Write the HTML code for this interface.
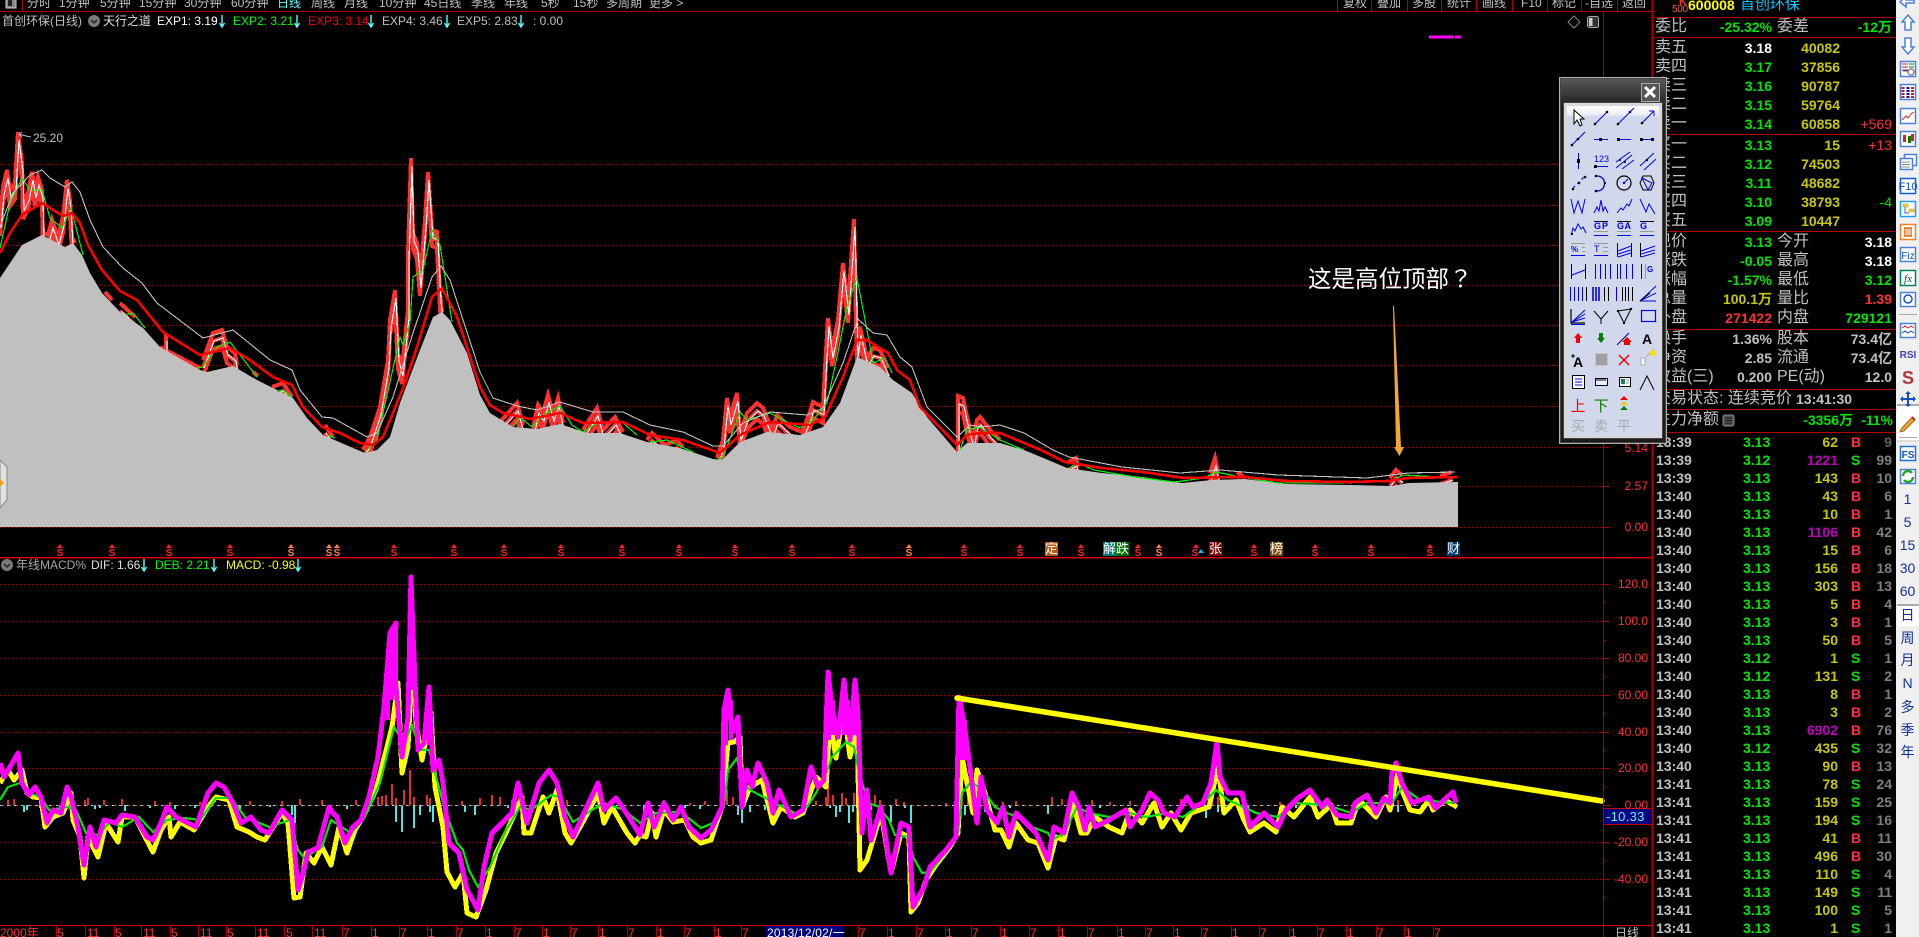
<!DOCTYPE html>
<html><head><meta charset="utf-8"><title>首创环保</title>
<style>
html,body{margin:0;padding:0;background:#000}
body{position:relative;width:1919px;height:937px;overflow:hidden;font-family:"Liberation Sans","WenQuanYi Zen Hei","Noto Sans CJK SC",sans-serif;font-size:12px;color:#c0c0c0}
.a{position:absolute;white-space:nowrap}
svg{position:absolute;left:0;top:0}
.tb span{position:absolute;top:-5px;line-height:16px;white-space:nowrap}
.l{position:absolute;left:1653px;width:243px;height:1px;background:#b00000}
.q span{position:absolute;line-height:18px;white-space:nowrap}
.lb{font-size:16px}
.n{font-size:14px;font-weight:bold}
.pr{right:147px}.vo{right:79px}.de{right:27px;font-weight:normal!important}.rr{right:27px}
.r{position:absolute;left:0;width:1919px;height:18px;line-height:18px;font-size:14px;font-weight:bold}
.r span{position:absolute}
.r .t{left:1656px;color:#c0c0c0}.r .p{left:1743px;color:#00e600}.r .v{right:81px;color:#c8c800}.r .m{color:#c000c0}
.r .b{left:1851px;color:#ff3232}.r .s{left:1851px;color:#00e600}.r .c{right:27px;color:#808080}
.ax{position:absolute;right:271px;color:#ff3232;line-height:14px;font-size:12px}
.side{position:absolute;left:1896px;width:23px;text-align:center;color:#1030a0;font-size:14px;line-height:18px}
.tag{position:absolute;top:542px;width:13px;height:14px;line-height:14px;font-size:13px;color:#fff;text-align:center}
</style></head><body>

<svg width="1919" height="937" viewBox="0 0 1919 937">
<g stroke="#b00000" stroke-width="1" stroke-dasharray="1 3" shape-rendering="crispEdges">
<path d="M0 164.5H1603M0 205.5H1603M0 245.5H1603M0 285.5H1603M0 325.5H1603M0 365.5H1603M0 406.5H1603M0 447.5H1603M0 486.5H1603M0 527.5H1603M0 584.5H1603M0 621.5H1603M0 658.5H1603M0 695.5H1603M0 732.5H1603M0 768.5H1603M0 842.5H1603M0 879.5H1603"/>
</g>
<defs>
<path id="cd" d="M0,220L3,187L7,170L10,190L15,183L18,132L22,163L23,203L28,193L32,172L35,190L38,177L42,190L43,233L48,235L52,220L58,237L63,217L67,180L70,200L72,237L75,243M105,292L112,300M120,303L135,317M166,333V347M160,347L200,368M203,360L213,333L222,330L227,347L235,353L237,365M253,372L258,376M272,387L283,383L292,397M325,425L333,437M363,450L370,437L380,407L388,360L390,320L395,290L398,353L402,368L408,310L408,253L411,158L413,233L417,243L420,280L425,220L428,172L432,230L437,232L440,293L442,312M500,422L517,403L523,425M533,428L538,405L543,413L548,395L553,413L558,398L563,423M583,430L597,408L603,430L615,417L623,432M647,440L652,433L665,445L677,440L683,447M717,458L723,440L727,398L730,417L737,393L740,433L747,413L757,403L763,408L772,430L777,415L790,427L802,432L810,412L813,402L823,407L825,367L828,318L832,350L838,320L843,263L848,307L854,219L857,350L860,327L867,358L873,348L880,350L888,368M958,452V396L963,398L967,417L973,440L977,420L980,417L990,430L1000,440M1067,463L1076,458L1078,467M1210,473L1215,458L1218,472M1237,472L1245,478M1390,478L1396,470L1402,475M1440,476L1452,472"/>
</defs>
<use href="#cd" fill="none" stroke="#ff3232" stroke-width="4" shape-rendering="crispEdges"/>
<use href="#cd" fill="none" stroke="#ff3232" stroke-width="4" transform="translate(0,8)" shape-rendering="crispEdges"/>
<use href="#cd" fill="none" stroke="#ff3232" stroke-width="4" transform="translate(0,16)" shape-rendering="crispEdges"/>
<use href="#cd" fill="none" stroke="#ffffff" stroke-width="1.1" transform="translate(1,8)" shape-rendering="crispEdges"/>
<!-- gray area -->
<path fill="#c0c0c0" d="M0,527V278L10,263L22,245L42,235L65,247L73,243L82,255L90,273L102,293L120,312L143,328L160,347L200,370L207,372L233,366L257,380L293,398L307,418L323,435L353,448L365,453L377,450L390,437L400,403L420,350L433,317L442,312L450,320L467,353L480,395L490,413L513,427L537,429L560,424L587,433L620,433L647,442L680,448L713,459L722,460L740,442L767,432L800,435L823,427L840,403L857,357L880,367L893,380L912,393L927,417L957,452L967,443L1000,443L1024,450L1053,462L1067,468L1102,473L1143,477L1182,483L1212,480L1245,479L1286,484L1351,485L1392,486L1408,483L1458,482V527Z"/>
<g fill="none" shape-rendering="crispEdges">
<path stroke="#00f000" stroke-width="1.2" d="M0,248L10,203L22,178L30,190L42,190L50,218L62,228L71,208L83,255M125,315L133,313L145,328M197,368L203,367L217,347L230,342L257,377M277,392L283,390L292,397M327,435L335,438M365,452L377,440L400,337L403,345L410,323L413,277L423,270L432,230L440,245L452,322M513,427L520,417L532,427L543,415L560,406L572,425L583,432L597,423L622,422L637,435M650,442L667,440L693,452M717,460L723,457L740,412L747,420L770,413L783,420L800,428L813,420L827,403L837,357L847,307L857,278L867,330L873,363L885,358L892,373M960,450L967,430L980,427L1000,440L1024,450M1069,468L1078,463L1094,470L1135,477L1175,482L1204,478L1216,472L1241,477L1278,483L1347,483L1392,480L1404,475L1457,478"/>
<path stroke="#c0c0c0" stroke-width="1.1" d="M0,227L13,193L30,175L42,170L50,178L65,187L72,182L80,192L90,220L103,247L123,268L142,283L157,303L203,338L233,330L270,360L292,370L300,390L322,417L333,418L367,437L377,433L393,397L413,333L432,277L441,266L450,280L480,372L493,398L517,406L537,410L560,402L593,412L623,412L650,425L683,432L713,446L723,446L743,423L770,412L807,415L823,408L843,363L858,319L873,333L887,335L900,357L912,367L927,407L957,437L970,425L980,427L1000,425L1024,433L1053,450L1069,457L1122,467L1180,473L1220,470L1278,475L1367,478L1408,473L1455,472"/>
<path stroke="#ff0000" stroke-width="2.6" d="M0,253L10,233L22,215L42,203L63,216L72,213L80,223L88,245L102,270L120,291L137,300L163,332L200,355L230,348L250,360L273,377L292,385L303,407L322,427L340,433L360,443L373,445L383,437L393,413L405,383L417,347L432,297L442,288L457,317L480,387L490,405L503,413L530,419L560,413L583,423L623,422L650,435L683,440L720,453L740,435L770,422L810,425L825,417L843,377L857,340L867,340L888,353L897,370L910,380L920,407L957,445L967,435L980,433L1000,433L1041,450L1065,462L1102,468L1143,472L1184,478L1229,477L1245,477L1286,481L1347,482L1388,481L1408,478L1457,477"/>
</g>
<!-- magenta marker -->
<path d="M1429 37H1454M1455 37H1461" stroke="#ff00ff" stroke-width="3"/>
<!-- peak label leader -->
<path d="M19,134L22,132M19,134L22,137M19,134L26,136L31,137" stroke="#c0c0c0" fill="none"/>
<!-- annotation arrow -->
<path d="M1393,306L1396,447H1394L1399.5,456L1404,447H1401L1394,306Z" fill="#f2a92e"/>
<!-- markers -->
<path fill="#ff2020" d="M60,544l3,4h-6zM112,544l3,4h-6zM169,544l3,4h-6zM230,544l3,4h-6zM394,544l3,4h-6zM454,544l3,4h-6zM504,544l3,4h-6zM561,544l3,4h-6zM622,544l3,4h-6zM679,544l3,4h-6zM735,544l3,4h-6zM792,544l3,4h-6zM852,544l3,4h-6zM964,544l3,4h-6zM1020,544l3,4h-6zM1081,544l3,4h-6zM1138,544l3,4h-6zM1196,544l3,4h-6zM1254,544l3,4h-6zM1315,544l3,4h-6zM1371,544l3,4h-6zM1430,544l3,4h-6z"/>
<path fill="#ff8040" d="M291,544l3,4h-6zM329,544l3,4h-6zM337,544l3,4h-6zM909,544l3,4h-6zM1159,544l3,4h-6z"/>
<path fill="#30b0ff" d="M1201,549l3,4h-6z"/>
<g font-family="Liberation Sans" font-size="10" font-weight="bold" text-anchor="middle" fill="#ff2020">
<text x="60" y="556">S</text><text x="112" y="556">S</text><text x="169" y="556">S</text><text x="230" y="556">S</text><text x="291" y="556" fill="#ff8040">S</text><text x="329" y="556" fill="#ff8040">S</text><text x="337" y="556" fill="#ff8040">S</text><text x="394" y="556">S</text><text x="454" y="556">S</text><text x="504" y="556">S</text><text x="561" y="556">S</text><text x="622" y="556">S</text><text x="679" y="556">S</text><text x="735" y="556">S</text><text x="792" y="556">S</text><text x="852" y="556">S</text><text x="909" y="556" fill="#ff8040">S</text><text x="964" y="556">S</text><text x="1020" y="556">S</text><text x="1081" y="556">S</text><text x="1138" y="556">S</text><text x="1159" y="556" fill="#ff8040">S</text><text x="1195" y="556">S</text><text x="1254" y="556">S</text><text x="1315" y="556">S</text><text x="1371" y="556">S</text><text x="1430" y="556">S</text>
</g>
<!-- histogram -->
<path stroke="#ff3232" stroke-width="1.8" d="M8 805V800M14 805V799M85 805V800M88 805V798M104 805V800M122 805V799M155 805V801M170 805V802M200 805V802M250 805V801M282 805V801M300 805V799M322 805V800M356 805V800M378 805V797M382 805V796M386 805V795M392 805V784M396 805V798M404 805V790M410 805V770M414 805V797M427 805V795M430 805V798M462 805V801M480 805V798M492 805V795M500 805V797M512 805V800M545 805V800M567 805V800M664 805V800M690 805V803M705 805V801M722 805V803M727 805V790M733 805V797M745 805V800M816 805V801M826 805V797M828 805V783M833 805V795M842 805V793M846 805V798M854 805V793M875 805V795M880 805V800M896 805V799M904 805V802M946 805V803M962 805V798M968 805V797M975 805V801M987 805V800M1003 805V802M1016 805V801M1052 805V797M1062 805V799M1092 805V800M1110 805V802M1130 805V801M1181 805V799M1212 805V795M1218 805V797M1280 805V802M1310 805V801M1392 805V797M1398 805V800"/>
<path stroke="#55ffff" stroke-width="1.8" d="M24 805V812M27 805V810M40 805V808M60 805V808M95 805V809M100 805V808M125 805V811M150 805V808M175 805V809M195 805V808M230 805V808M240 805V809M270 805V807M295 805V823M292 805V815M330 805V808M347 805V809M396 805V822M402 805V832M414 805V828M420 805V815M430 805V812M433 805V822M440 805V818M465 805V812M475 805V815M508 805V808M530 805V808M560 805V808M644 805V812M650 805V808M685 805V808M700 805V809M742 805V823M738 805V815M750 805V812M765 805V810M830 805V808M836 805V817M840 805V812M849 805V823M853 805V812M871 805V810M891 805V822M905 805V808M911 805V823M957 805V812M965 805V815M985 805V812M1010 805V808M1048 805V814M1100 805V808M1143 805V812M1180 805V810M1206 805V818M1218 805V812M1243 805V814M1248 805V810M1296 805V808M1398 805V812M1408 805V808M1456 805V808"/>
<path d="M0 805.5H1458" stroke="#55ffff" stroke-dasharray="3 4" stroke-width="1"/>
<path d="M2 805.5H1458" stroke="#ff3232" stroke-dasharray="2 5" stroke-width="1"/>
<!-- MACD lines -->
<g fill="none" shape-rendering="crispEdges" stroke-linejoin="round">
<path stroke="#ffff00" stroke-width="5" d="M0,783L8,770L14,780L22,770L27,793L33,797L41,798L45,827L53,817L63,813L71,793L73,820L80,837L84,878L88,837L98,857L106,823L118,842L122,817L135,817L143,833L153,852L161,830L169,817L171,837L180,822L194,830L208,807L216,797L229,800L237,827L249,832L257,837L265,840L282,813L288,823L294,898L300,897L306,853L314,863L322,847L331,865L339,827L347,853L355,830L363,817L376,790L392,727L398,683L402,773L408,747L413,650L416,723L422,760L431,713L435,787L443,827L447,872L455,887L463,873L467,913L476,917L486,890L496,853L506,833L522,797L524,833L531,833L543,797L549,813L557,790L565,833L571,843L584,820L598,793L604,823L612,807L627,833L635,843L640,835L646,837L652,813L656,837L664,810L673,822L685,820L693,837L701,843L711,840L722,807L728,743L734,742L740,737L742,807L750,787L762,780L773,823L781,807L795,817L803,813L816,777L826,787L830,720L836,758L844,710L850,757L857,720L860,870L867,860L873,840L881,813L891,873L901,833L909,837L911,912L918,903L926,880L936,865L950,847L958,833L962,757L973,813L977,770L985,793L995,830L1001,830L1009,847L1016,823L1028,840L1038,843L1048,868L1056,837L1064,840L1073,803L1081,833L1087,833L1095,817L1109,827L1122,833L1130,810L1142,823L1154,803L1162,827L1171,813L1181,830L1191,813L1209,807L1218,767L1224,813L1236,800L1244,820L1250,832L1264,823L1276,832L1282,807L1294,817L1310,797L1318,817L1331,805L1337,823L1351,823L1359,800L1376,817L1386,797L1390,810L1398,773L1402,790L1410,810L1420,812L1429,800L1433,810L1445,800L1457,807"/>
<path stroke="#00e600" stroke-width="2.2" d="M0,800L8,787L20,783L29,793L41,797L49,810L67,807L76,810L86,833L98,835L110,822L122,827L139,817L153,832L167,820L184,818L200,820L216,798L231,798L245,817L269,827L290,820L298,850L304,858L322,847L331,820L351,833L363,820L380,783L394,727L404,743L412,725L420,750L429,750L445,810L457,843L463,850L469,870L478,887L490,867L506,830L520,807L531,810L551,795L559,797L573,822L592,810L604,803L624,810L640,823L656,813L681,812L701,828L713,823L724,807L728,770L737,758L742,783L750,790L775,803L795,813L807,807L816,793L826,773L832,757L846,742L854,747L860,777L869,803L879,807L889,820L895,835L909,837L913,857L922,873L930,872L946,852L958,833L962,793L971,782L983,790L995,807L1007,813L1020,818L1032,827L1048,833L1052,840L1064,833L1077,807L1089,813L1109,817L1130,813L1146,817L1167,813L1183,817L1203,803L1216,790L1228,800L1244,807L1256,813L1278,817L1294,803L1327,805L1351,813L1367,803L1392,803L1402,787L1420,800L1455,803"/>
<path stroke="#ff00ff" stroke-width="5" d="M0,763L4,777L10,767L18,753L22,783L29,795L35,787L41,797L47,823L53,810L61,813L67,787L71,797L78,827L84,865L90,827L96,847L104,820L116,823L122,815L135,817L147,837L153,840L161,823L167,807L176,817L196,827L208,793L216,783L224,787L233,803L241,823L251,817L261,830L269,833L282,810L292,820L298,890L304,870L308,852L318,848L329,807L333,813L337,817L345,843L353,827L361,820L369,797L378,757L384,707L390,633L396,623L394,663L402,757L408,717L411,577L413,633L418,750L424,743L429,687L433,770L439,760L443,783L449,843L459,853L467,890L471,897L478,910L484,867L492,833L502,823L512,813L518,783L527,823L539,783L549,770L557,783L565,817L573,837L584,813L598,783L604,810L616,798L629,817L640,835L648,803L654,827L664,803L673,820L681,807L689,827L701,838L711,830L722,807L724,710L728,690L732,733L738,717L742,807L747,770L752,787L758,763L767,783L773,813L779,790L791,817L803,810L811,767L818,787L824,780L828,672L832,707L838,737L844,680L850,740L855,680L858,713L862,833L867,790L871,840L881,807L891,873L901,823L909,827L913,907L924,887L930,867L946,850L956,837L959,697L964,722L969,760L977,823L981,777L987,810L997,823L1003,807L1009,837L1016,813L1026,823L1036,833L1048,860L1054,827L1064,833L1072,793L1079,807L1085,830L1089,807L1095,827L1109,820L1126,810L1130,827L1142,810L1150,793L1158,800L1164,813L1175,817L1187,797L1193,807L1203,803L1211,783L1217,742L1220,777L1228,793L1236,793L1242,793L1250,827L1264,813L1278,827L1286,810L1298,798L1310,790L1322,807L1327,800L1337,815L1351,817L1355,803L1367,795L1376,813L1384,798L1390,803L1392,773L1396,763L1402,783L1412,803L1429,797L1435,808L1453,792L1456,803"/>
<path stroke="#ff00ff" stroke-width="4" d="M392 630V700M396 625V690M388 650V720M411 577V690M429 687V745M726 695V745M731 700V740M738 717V745M829 672V740M833 700V735M844 680V735M848 700V735M855 680V735M961 697V760M965 720V760"/>
</g>
<path d="M957,698L1602,801" stroke="#ffff00" stroke-width="5.5" stroke-linecap="round"/>
<!-- frame lines -->
<g stroke="#b00000" fill="none" shape-rendering="crispEdges">
<path d="M0 11.5H1653M22.5 0V11M1337.5 0V11M1371.5 0V11M1407.5 0V11M1441.5 0V11M1476.5 0V11M1512.5 0V11M1547.5 0V11M1581.5 0V11M1617.5 0V11M1603.5 11V937"/>
<path d="M0 557.5H1653" stroke="#d80000" stroke-width="1.5"/>
<path d="M0 925.5H1653" stroke="#d80000"/>
<path d="M1603 447.5h6M1603 486.5h6M1603 527.5h6M1603 584.5h6M1603 621.5h6M1603 658.5h6M1603 695.5h6M1603 732.5h6M1603 768.5h6M1603 805.5h6M1603 842.5h6M1603 879.5h6M1603 602.5h3M1603 640.5h3M1603 676.5h3M1603 713.5h3M1603 750.5h3M1603 787.5h3M1603 823.5h3M1603 860.5h3M1603 897.5h3"/>
<path d="M56.5 925V937M85.5 925V937M114.5 925V937M141.5 925V937M170.5 925V937M198.5 925V937M226.5 925V937M255.5 925V937M284.5 925V937M312.5 925V937M342.5 925V937M371.5 925V937M399.5 925V937M427.5 925V937M456.5 925V937M485.5 925V937M514.5 925V937M542.5 925V937M570.5 925V937M598.5 925V937M627.5 925V937M656.5 925V937M684.5 925V937M714.5 925V937M741.5 925V937M858.5 925V937M887.5 925V937M916.5 925V937M945.5 925V937M971.5 925V937M1000.5 925V937M1029.5 925V937M1058.5 925V937M1087.5 925V937M1117.5 925V937M1145.5 925V937M1173.5 925V937M1201.5 925V937M1231.5 925V937M1259.5 925V937M1289.5 925V937M1317.5 925V937M1346.5 925V937M1376.5 925V937M1404.5 925V937M1433.5 925V937"/>
<path d="M1652.5 0V937" stroke-width="2"/>
</g>
<!-- title arrows -->
<path stroke="#55ffff" fill="none" stroke-width="1.4" d="M222 15V26M219.5 23L222 27L224.5 23M297 15V26M294.5 23L297 27L299.5 23M371 15V26M368.5 23L371 27L373.5 23M447 15V26M444.5 23L447 27L449.5 23M521 15V26M518.5 23L521 27L523.5 23M144 559V570M141.5 567L144 571L146.5 567M214 559V570M211.5 567L214 571L216.5 567M298 559V570M295.5 567L298 571L300.5 567"/>
<circle cx="94" cy="21" r="6" fill="#7a7a7a"/><path d="M91 20l3 3l3-3" stroke="#222" stroke-width="1.5" fill="none"/>
<circle cx="7" cy="565" r="6" fill="#7a7a7a"/><path d="M4 564l3 3l3-3" stroke="#222" stroke-width="1.5" fill="none"/>
<rect x="6" y="-2" width="10" height="10" fill="#888" stroke="#ccc"/><rect x="8" y="0" width="4" height="6" fill="#222"/>
<path d="M1574 16l6 6l-6 6l-6-6z" stroke="#888" fill="none"/>
<rect x="1587.5" y="16.5" width="11" height="11" rx="2" stroke="#aaa" fill="#333"/><rect x="1589" y="18" width="3.5" height="8" fill="#ccc"/>
<!-- left tab -->
<path d="M0 460L7 467V500L0 508Z" fill="#e0e0e0" stroke="#888"/><path d="M0 479L4 483L0 487Z" fill="#f0a020"/>
<rect x="1604" y="809" width="48" height="15" fill="#000080"/>
<path d="M1604 808.5H1652M1604 824.5H1652" stroke="#c00000"/>
<rect x="766" y="926" width="77" height="11" fill="#000080"/>
</svg>

<!-- toolbar -->
<div class="tb">
<span style="left:27px">分时</span><span style="left:59px">1分钟</span><span style="left:100px">5分钟</span><span style="left:139px">15分钟</span><span style="left:184px">30分钟</span><span style="left:231px">60分钟</span><span style="left:277px;color:#55ffff">日线</span><span style="left:311px">周线</span><span style="left:344px">月线</span><span style="left:379px">10分钟</span><span style="left:424px">45日线</span><span style="left:471px">季线</span><span style="left:504px">年线</span><span style="left:541px">5秒</span><span style="left:573px">15秒</span><span style="left:606px">多周期</span><span style="left:649px">更多 &gt;</span>
<span style="left:1343px">复权</span><span style="left:1377px">叠加</span><span style="left:1412px">多股</span><span style="left:1447px">统计</span><span style="left:1482px">画线</span><span style="left:1521px">F10</span><span style="left:1552px">标记</span><span style="left:1585px">-自选</span><span style="left:1622px">返回</span>
</div>

<!-- title row -->
<div class="a" style="left:2px;top:14px;line-height:14px">首创环保(日线)</div>
<div class="a" style="left:103px;top:14px;line-height:14px;color:#e0e0e0">天行之道</div>
<div class="a" style="left:157px;top:14px;line-height:14px;color:#fff">EXP1: 3.19</div>
<div class="a" style="left:233px;top:14px;line-height:14px;color:#00ff00">EXP2: 3.21</div>
<div class="a" style="left:308px;top:14px;line-height:14px;color:#ff0000">EXP3: 3.14</div>
<div class="a" style="left:382px;top:14px;line-height:14px;color:#c0c0c0">EXP4: 3.46</div>
<div class="a" style="left:457px;top:14px;line-height:14px;color:#c0c0c0">EXP5: 2.83</div>
<div class="a" style="left:533px;top:14px;line-height:14px;color:#c0c0c0">: 0.00</div>
<div class="a" style="left:33px;top:131px;line-height:14px">25.20</div>
<div class="a" style="left:1308px;top:261px;line-height:32px;font-size:23.5px;color:#fff;font-family:'Liberation Sans','Noto Sans CJK SC',sans-serif">这是高位顶部<span style="font-family:'Noto Sans CJK TC',sans-serif">？</span></div>

<!-- tags -->
<div class="tag" style="left:1045px;background:#c05a14">定</div>
<div class="tag" style="left:1103px;background:#007878">解</div>
<div class="tag" style="left:1116px;background:#007000">跌</div>
<div class="tag" style="left:1209px;background:#800000">张</div>
<div class="tag" style="left:1270px;background:#7a4a10">榜</div>
<div class="tag" style="left:1447px;background:#003a70">财</div>

<!-- MACD title -->
<div class="a" style="left:16px;top:558px;line-height:14px;color:#aaa">年线MACD%</div>
<div class="a" style="left:91px;top:558px;line-height:14px;color:#e0e0e0">DIF: 1.66</div>
<div class="a" style="left:155px;top:558px;line-height:14px;color:#00ff00">DEB: 2.21</div>
<div class="a" style="left:226px;top:558px;line-height:14px;color:#ffff00">MACD: -0.98</div>

<!-- axis labels -->
<div class="ax" style="top:441px">5.14</div><div class="ax" style="top:479px">2.57</div><div class="ax" style="top:520px">0.00</div>
<div class="ax" style="top:577px">120.0</div><div class="ax" style="top:614px">100.0</div><div class="ax" style="top:651px">80.00</div><div class="ax" style="top:688px">60.00</div><div class="ax" style="top:725px">40.00</div><div class="ax" style="top:761px">20.00</div><div class="ax" style="top:798px">0.00</div><div class="ax" style="top:835px">-20.00</div><div class="ax" style="top:872px">-40.00</div>
<div class="a" style="left:1606px;top:809px;line-height:15px;font-size:13px;color:#55ffff;letter-spacing:.3px">-10.33</div>

<!-- time axis -->
<div class="a" id="tx" style="left:0;top:926px;width:1650px;height:11px;line-height:14px;color:#ff3232;font-size:12px;overflow:hidden">
<span class="a" style="left:0">2000年</span><span class="a" style="left:57px">5</span><span class="a" style="left:87px">11</span><span class="a" style="left:115px">5</span><span class="a" style="left:143px">11</span><span class="a" style="left:171px">5</span><span class="a" style="left:200px">11</span><span class="a" style="left:227px">5</span><span class="a" style="left:257px">11</span><span class="a" style="left:286px">5</span><span class="a" style="left:314px">11</span><span class="a" style="left:343px">7</span><span class="a" style="left:372px">1</span><span class="a" style="left:400px">7</span><span class="a" style="left:428px">1</span><span class="a" style="left:457px">7</span><span class="a" style="left:486px">1</span><span class="a" style="left:515px">7</span><span class="a" style="left:543px">1</span><span class="a" style="left:571px">7</span><span class="a" style="left:599px">1</span><span class="a" style="left:628px">7</span><span class="a" style="left:657px">1</span><span class="a" style="left:685px">7</span><span class="a" style="left:715px">1</span><span class="a" style="left:742px">7</span><span class="a" style="left:767px;color:#fff;letter-spacing:.2px">2013/12/02/一</span><span class="a" style="left:859px">7</span><span class="a" style="left:888px">1</span><span class="a" style="left:917px">7</span><span class="a" style="left:946px">1</span><span class="a" style="left:972px">7</span><span class="a" style="left:1001px">1</span><span class="a" style="left:1030px">7</span><span class="a" style="left:1059px">1</span><span class="a" style="left:1088px">7</span><span class="a" style="left:1118px">1</span><span class="a" style="left:1146px">7</span><span class="a" style="left:1174px">1</span><span class="a" style="left:1202px">7</span><span class="a" style="left:1232px">1</span><span class="a" style="left:1260px">7</span><span class="a" style="left:1290px">1</span><span class="a" style="left:1318px">7</span><span class="a" style="left:1347px">1</span><span class="a" style="left:1377px">7</span><span class="a" style="left:1405px">1</span><span class="a" style="left:1434px">7</span><span class="a" style="left:1615px;color:#c0c0c0">日线</span>
</div>

<!-- right panel lines -->
<div class="l" style="top:17px"></div><div class="l" style="top:37px"></div><div class="l" style="top:134px"></div><div class="l" style="top:231px"></div><div class="l" style="top:329px"></div><div class="l" style="top:389px"></div><div class="l" style="top:409px"></div><div class="l" style="top:432px"></div>

<!-- quotes -->
<div class="q">
<span style="left:1679px;top:-7px;color:#ff3232;font-size:11px;font-weight:bold">K</span>
<span style="left:1672px;top:1px;color:#ff5050;font-size:10px;letter-spacing:-.3px">500</span>
<span class="n" style="left:1688px;top:-4px;color:#ffff00;font-size:14px">600008</span>
<span style="left:1740px;top:-4px;color:#00c8ff;font-size:15px">首创环保</span>

<span class="lb" style="left:1655px;top:18px">委比</span><span class="n pr" style="top:18px;color:#00e600">-25.32%</span><span class="lb" style="left:1777px;top:18px">委差</span><span class="n rr" style="top:18px;color:#00e600">-12万</span>

<span class="lb" style="left:1655px;top:39px">卖五</span><span class="n pr" style="top:39px;color:#fff">3.18</span><span class="n vo" style="top:39px;color:#c8c800">40082</span>
<span class="lb" style="left:1655px;top:58px">卖四</span><span class="n pr" style="top:58px;color:#00e600">3.17</span><span class="n vo" style="top:58px;color:#c8c800">37856</span>
<span class="lb" style="left:1655px;top:77px">卖三</span><span class="n pr" style="top:77px;color:#00e600">3.16</span><span class="n vo" style="top:77px;color:#c8c800">90787</span>
<span class="lb" style="left:1655px;top:96px">卖二</span><span class="n pr" style="top:96px;color:#00e600">3.15</span><span class="n vo" style="top:96px;color:#c8c800">59764</span>
<span class="lb" style="left:1655px;top:115px">卖一</span><span class="n pr" style="top:115px;color:#00e600">3.14</span><span class="n vo" style="top:115px;color:#c8c800">60858</span><span class="n de" style="top:115px;color:#ff3232">+569</span>

<span class="lb" style="left:1655px;top:136px">买一</span><span class="n pr" style="top:136px;color:#00e600">3.13</span><span class="n vo" style="top:136px;color:#c8c800">15</span><span class="n de" style="top:136px;color:#ff3232">+13</span>
<span class="lb" style="left:1655px;top:155px">买二</span><span class="n pr" style="top:155px;color:#00e600">3.12</span><span class="n vo" style="top:155px;color:#c8c800">74503</span>
<span class="lb" style="left:1655px;top:174px">买三</span><span class="n pr" style="top:174px;color:#00e600">3.11</span><span class="n vo" style="top:174px;color:#c8c800">48682</span>
<span class="lb" style="left:1655px;top:193px">买四</span><span class="n pr" style="top:193px;color:#00e600">3.10</span><span class="n vo" style="top:193px;color:#c8c800">38793</span><span class="n de" style="top:193px;color:#00e600">-4</span>
<span class="lb" style="left:1655px;top:212px">买五</span><span class="n pr" style="top:212px;color:#00e600">3.09</span><span class="n vo" style="top:212px;color:#c8c800">10447</span>

<span class="lb" style="left:1655px;top:233px">现价</span><span class="n pr" style="top:233px;color:#00e600">3.13</span><span class="lb" style="left:1777px;top:233px">今开</span><span class="n rr" style="top:233px;color:#fff">3.18</span>
<span class="lb" style="left:1655px;top:252px">涨跌</span><span class="n pr" style="top:252px;color:#00e600">-0.05</span><span class="lb" style="left:1777px;top:252px">最高</span><span class="n rr" style="top:252px;color:#fff">3.18</span>
<span class="lb" style="left:1655px;top:271px">涨幅</span><span class="n pr" style="top:271px;color:#00e600">-1.57%</span><span class="lb" style="left:1777px;top:271px">最低</span><span class="n rr" style="top:271px;color:#00e600">3.12</span>
<span class="lb" style="left:1655px;top:290px">总量</span><span class="n pr" style="top:290px;color:#c8c800">100.1万</span><span class="lb" style="left:1777px;top:290px">量比</span><span class="n rr" style="top:290px;color:#ff3232">1.39</span>
<span class="lb" style="left:1655px;top:309px">外盘</span><span class="n pr" style="top:309px;color:#ff3232">271422</span><span class="lb" style="left:1777px;top:309px">内盘</span><span class="n rr" style="top:309px;color:#00e600">729121</span>

<span class="lb" style="left:1655px;top:330px">换手</span><span class="n pr" style="top:330px">1.36%</span><span class="lb" style="left:1777px;top:330px">股本</span><span class="n rr" style="top:330px">73.4亿</span>
<span class="lb" style="left:1655px;top:349px">净资</span><span class="n pr" style="top:349px">2.85</span><span class="lb" style="left:1777px;top:349px">流通</span><span class="n rr" style="top:349px">73.4亿</span>
<span class="lb" style="left:1655px;top:368px">收益(三)</span><span class="n pr" style="top:368px">0.200</span><span class="lb" style="left:1777px;top:368px">PE(动)</span><span class="n rr" style="top:368px">12.0</span>

<span class="lb" style="left:1655px;top:390px">交易状态: 连续竞价</span><span class="n" style="left:1796px;top:390px">13:41:30</span>
<span class="lb" style="left:1655px;top:411px">主力净额</span><span class="n" style="right:66px;top:411px;color:#00e600">-3356万</span><span class="n" style="right:26px;top:411px;color:#00e600">-11%</span>
</div>
<svg width="1919" height="937" style="pointer-events:none"><rect x="1723" y="415" width="11" height="11" rx="2" fill="#555" stroke="#888"/><path d="M1725 418h7M1725 420.5h7M1725 423h7" stroke="#111"/></svg>

<!-- ticks -->
<div class="r" style="top:433px"><span class="t">13:39</span><span class="p">3.13</span><span class="v">62</span><span class="b">B</span><span class="c" style="color:#606060">9</span></div>
<div class="r" style="top:451px"><span class="t">13:39</span><span class="p">3.12</span><span class="v m">1221</span><span class="s">S</span><span class="c">99</span></div>
<div class="r" style="top:469px"><span class="t">13:39</span><span class="p">3.13</span><span class="v">143</span><span class="b">B</span><span class="c">10</span></div>
<div class="r" style="top:487px"><span class="t">13:40</span><span class="p">3.13</span><span class="v">43</span><span class="b">B</span><span class="c">6</span></div>
<div class="r" style="top:505px"><span class="t">13:40</span><span class="p">3.13</span><span class="v">10</span><span class="b">B</span><span class="c">1</span></div>
<div class="r" style="top:523px"><span class="t">13:40</span><span class="p">3.13</span><span class="v m">1106</span><span class="b">B</span><span class="c">42</span></div>
<div class="r" style="top:541px"><span class="t">13:40</span><span class="p">3.13</span><span class="v">15</span><span class="b">B</span><span class="c">6</span></div>
<div class="r" style="top:559px"><span class="t">13:40</span><span class="p">3.13</span><span class="v">156</span><span class="b">B</span><span class="c">18</span></div>
<div class="r" style="top:577px"><span class="t">13:40</span><span class="p">3.13</span><span class="v">303</span><span class="b">B</span><span class="c">13</span></div>
<div class="r" style="top:595px"><span class="t">13:40</span><span class="p">3.13</span><span class="v">5</span><span class="b">B</span><span class="c">4</span></div>
<div class="r" style="top:613px"><span class="t">13:40</span><span class="p">3.13</span><span class="v">3</span><span class="b">B</span><span class="c">1</span></div>
<div class="r" style="top:631px"><span class="t">13:40</span><span class="p">3.13</span><span class="v">50</span><span class="b">B</span><span class="c">5</span></div>
<div class="r" style="top:649px"><span class="t">13:40</span><span class="p">3.12</span><span class="v">1</span><span class="s">S</span><span class="c">1</span></div>
<div class="r" style="top:667px"><span class="t">13:40</span><span class="p">3.12</span><span class="v">131</span><span class="s">S</span><span class="c">2</span></div>
<div class="r" style="top:685px"><span class="t">13:40</span><span class="p">3.13</span><span class="v">8</span><span class="b">B</span><span class="c">1</span></div>
<div class="r" style="top:703px"><span class="t">13:40</span><span class="p">3.13</span><span class="v">3</span><span class="b">B</span><span class="c">2</span></div>
<div class="r" style="top:721px"><span class="t">13:40</span><span class="p">3.13</span><span class="v m">6902</span><span class="b">B</span><span class="c">76</span></div>
<div class="r" style="top:739px"><span class="t">13:40</span><span class="p">3.12</span><span class="v">435</span><span class="s">S</span><span class="c">32</span></div>
<div class="r" style="top:757px"><span class="t">13:40</span><span class="p">3.13</span><span class="v">90</span><span class="b">B</span><span class="c">13</span></div>
<div class="r" style="top:775px"><span class="t">13:41</span><span class="p">3.13</span><span class="v">78</span><span class="s">S</span><span class="c">24</span></div>
<div class="r" style="top:793px"><span class="t">13:41</span><span class="p">3.13</span><span class="v">159</span><span class="s">S</span><span class="c">25</span></div>
<div class="r" style="top:811px"><span class="t">13:41</span><span class="p">3.13</span><span class="v">194</span><span class="s">S</span><span class="c">16</span></div>
<div class="r" style="top:829px"><span class="t">13:41</span><span class="p">3.13</span><span class="v">41</span><span class="b">B</span><span class="c">11</span></div>
<div class="r" style="top:847px"><span class="t">13:41</span><span class="p">3.13</span><span class="v">496</span><span class="b">B</span><span class="c">30</span></div>
<div class="r" style="top:865px"><span class="t">13:41</span><span class="p">3.13</span><span class="v">110</span><span class="s">S</span><span class="c">4</span></div>
<div class="r" style="top:883px"><span class="t">13:41</span><span class="p">3.13</span><span class="v">149</span><span class="s">S</span><span class="c">11</span></div>
<div class="r" style="top:901px"><span class="t">13:41</span><span class="p">3.13</span><span class="v">100</span><span class="s">S</span><span class="c">5</span></div>
<div class="r" style="top:919px"><span class="t">13:41</span><span class="p">3.13</span><span class="v">1</span><span class="s">S</span><span class="c">1</span></div>

<!-- sidebar -->
<div class="a" style="left:1896px;top:0;width:23px;height:937px;background:#f0f0f0"></div>
<div class="a" style="left:1897px;top:404px;width:22px;height:38px;background:#fff;border-top:2px solid #aaa;border-bottom:2px solid #ddd;box-sizing:border-box"></div>
<div class="a" style="left:1897px;top:604px;width:22px;height:22px;background:#fff;border-top:2px solid #aaa;box-sizing:border-box"></div>
<svg width="1919" height="937">
<g fill="#fff" stroke="#4a80e0" stroke-width="1.5">
<path d="M1900,2L1906,-4V0H1914V3H1906V7Z"/>
<path d="M1908,15L1914,22H1911V30H1905V22H1902Z"/>
<path d="M1905,38H1911V47H1914L1908,54L1902,47H1905Z"/>
<rect x="1900.5" y="61.5" width="15" height="15"/><rect x="1900.5" y="84.5" width="15" height="15"/><rect x="1900.5" y="108.5" width="15" height="15"/><rect x="1900.5" y="131.5" width="15" height="15"/>
<rect x="1904.5" y="154.5" width="12" height="11"/><rect x="1900.5" y="158.5" width="12" height="11"/>
<rect x="1900.5" y="178.5" width="15" height="15" stroke="#1060e0"/><rect x="1900.5" y="201.5" width="15" height="15" stroke="#20a0ff"/><rect x="1900.5" y="224.5" width="15" height="15" stroke="#f08030"/>
<rect x="1900.5" y="247.5" width="15" height="14"/><rect x="1900.5" y="270.5" width="15" height="15" stroke="#008060"/><rect x="1900.5" y="292.5" width="15" height="14"/>
<rect x="1900.5" y="323.5" width="15" height="14"/><rect x="1900.5" y="446.5" width="15" height="14" stroke="#2070e0"/><rect x="1900.5" y="469.5" width="15" height="14"/>
</g>
<path d="M1902,64h6M1902,67h6M1902,70h6" stroke="#c02020"/><path d="M1909,64h5M1909,67h5" stroke="#008000"/><path d="M1903,71h5" stroke="#1060c0"/><circle cx="1911" cy="72" r="3" fill="none" stroke="#888" stroke-width="1.5"/>
<path d="M1903,87v11" stroke="#c02020" stroke-width="3" stroke-dasharray="2 1"/><path d="M1908,87v11" stroke="#1010c0" stroke-width="3" stroke-dasharray="2 1"/><path d="M1912.5,87v11" stroke="#c02020" stroke-width="3" stroke-dasharray="2 1"/>
<path d="M1902,120L1906,116L1908,118L1911,114L1914,112" stroke="#e02020" fill="none"/>
<path d="M1903,135h3v7h-3zM1911,134h3v7h-3z" fill="#e02020"/><path d="M1908,136h3v7h-3z" fill="#008000"/>
<path d="M1902,162h8M1902,164.5h8M1902,167h8" stroke="#888"/>
<text x="1908" y="190" font-family="Liberation Sans" font-size="11" fill="#1050d0" text-anchor="middle">F10</text>
<path d="M1903,204h5v3h-5zM1909,209h5v3h-5z" fill="#f0d040" stroke="#d09000" stroke-width=".6"/><path d="M1905,207v6h4" stroke="#3060d0" fill="none"/>
<rect x="1904" y="227" width="8" height="10" fill="#f08030"/><path d="M1905,230h6M1905,232h6M1905,234h6" stroke="#fff"/>
<text x="1908" y="259" font-family="Liberation Sans" font-size="10" fill="#1050d0" text-anchor="middle">Fiz</text>
<text x="1908" y="282" font-family="Liberation Serif" font-size="11" font-style="italic" fill="#005040" text-anchor="middle">fx</text>
<circle cx="1908" cy="299" r="4" fill="none" stroke="#2050d0" stroke-width="1.5"/>
<path d="M1899 314.5H1917M1899 437.5H1917" stroke="#aaa"/>
<path d="M1902,328l3,-2l3,2l3,-2l3,2" stroke="#e02020" fill="none"/><path d="M1902,333l3,-2l3,2l3,-2l3,2" stroke="#2050d0" fill="none"/>
<text x="1908" y="358" font-family="Liberation Sans" font-size="10" font-weight="bold" fill="#4040c0" text-anchor="middle">RSI</text>
<text x="1908" y="384" font-family="Liberation Sans" font-size="18" font-weight="bold" fill="#c03030" stroke="#999" stroke-width=".3" text-anchor="middle">S</text>
<path d="M1908,391l3,3h-2v4h4v-2l3,3l-3,3v-2h-4v4h2l-3,3l-3,-3h2v-4h-4v2l-3,-3l3,-3v2h4v-4h-2z" fill="#1050c0"/>
<path d="M1901,429L1912,417L1915,420L1904,431L1900,432Z" fill="#e8a030" stroke="#805010" stroke-width=".7"/><path d="M1912,417l3,3" stroke="#c03020" stroke-width="2"/>
<text x="1908" y="458" font-family="Liberation Sans" font-size="10" font-weight="bold" fill="#1050c0" text-anchor="middle">FS</text>
<path d="M1903,476a5,5 0 0 1 9,-3M1913,477a5,5 0 0 1 -9,3" stroke="#30a030" stroke-width="2.5" fill="none"/>
</svg>
<div class="side" style="top:490px">1</div><div class="side" style="top:513px">5</div><div class="side" style="top:536px">15</div><div class="side" style="top:559px">30</div><div class="side" style="top:582px">60</div><div class="side" style="top:606px">日</div><div class="side" style="top:629px">周</div><div class="side" style="top:651px">月</div><div class="side" style="top:674px">N</div><div class="side" style="top:698px">多</div><div class="side" style="top:721px">季</div><div class="side" style="top:743px">年</div>

<!-- drawing palette -->
<div class="a" style="left:1559px;top:77px;width:106px;height:365px;border:1px solid #b0b0b0;background:linear-gradient(#5a5a5a,#2c2c2c 22px,#1c1c1c 30px);box-shadow:inset 0 0 0 1px #444"></div>
<div class="a" style="left:1564px;top:103px;width:92px;height:329px;border:3px solid #d8d8d8;outline:1px solid #444;background:linear-gradient(#fff,#eef0f8 8px,#d2d8eb 11px)"></div>
<div class="a" style="left:1641px;top:83px;width:17px;height:17px;border:1px solid #aaa;background:#555"></div>
<svg width="1919" height="937">
<path d="M1645,87L1655,97M1655,87L1645,97" stroke="#fff" stroke-width="3"/>
<defs>
<g id="d2"><path d="M-6,6L6,-6" stroke="#0000f0" fill="none"/><circle cx="-6" cy="6" r="1.3"/><circle cx="6" cy="-6" r="1.3"/></g>
</defs>
<g fill="#000" font-family="Liberation Sans">
<!-- row 0 -->
<path d="M1574,110V124L1577,120L1580,126L1582,125L1580,119L1584,119Z" fill="#fff" stroke="#000"/>
<use href="#d2" x="1601" y="118"/>
<use href="#d2" x="1624" y="118"/><path d="M1630,112L1634,108" stroke="#0000f0"/>
<path d="M1641,124L1654,111M1654,111h-5M1654,111v5" stroke="#0000f0" fill="none"/><circle cx="1642" cy="123" r="1.3"/>
<!-- row 1 -->
<path d="M1571,146L1585,132" stroke="#0000f0"/><circle cx="1572" cy="145" r="1.3"/><circle cx="1578" cy="139" r="1.3"/>
<path d="M1594,139.5H1608M1617,139.5H1631M1640,139.5H1654" stroke="#0000f0"/><rect x="1599" y="138" width="3" height="3"/><rect x="1617" y="138" width="3" height="3"/><rect x="1640" y="138" width="3" height="3"/><rect x="1651" y="138" width="3" height="3"/>
<!-- row 2 -->
<path d="M1578.5,153V169" stroke="#0000f0"/><rect x="1577" y="159" width="3" height="4"/>
<text x="1594" y="162" font-size="9" fill="#0000f0">123</text><path d="M1594,166.5H1608" stroke="#0000f0"/><rect x="1594" y="165" width="3" height="3"/>
<path d="M1616,162L1630,152M1616,168L1632,155M1622,169L1634,160" stroke="#0000f0"/><circle cx="1620" cy="160" r="1"/><circle cx="1625" cy="162" r="1"/>
<path d="M1640,166L1654,153M1644,170L1656,159" stroke="#0000f0"/><circle cx="1647" cy="160" r="1.2"/>
<!-- row 3 -->
<path d="M1573,188L1585,176" stroke="#0000f0" stroke-dasharray="3 3"/><circle cx="1573" cy="189" r="1.3"/><circle cx="1579" cy="183" r="1.3"/><circle cx="1585" cy="177" r="1.3"/>
<path d="M1597,176C1607,176 1607,191 1597,191" stroke="#0000f0" fill="none" stroke-width="1.3"/><circle cx="1596" cy="176" r="1.3"/><circle cx="1596" cy="191" r="1.3"/><circle cx="1605" cy="183" r="1"/>
<circle cx="1624" cy="183" r="7" fill="none" stroke="#000" stroke-width="1.2"/><path d="M1624,183L1628,179" stroke="#0000f0"/><circle cx="1624" cy="183" r="1.2" fill="#0000f0"/>
<path d="M1643,176H1651L1654,183L1651,190H1643L1640,183Z" fill="none" stroke="#000"/><path d="M1642,178L1652,183L1648,190Z" fill="none" stroke="#0000f0"/>
<!-- row 4 -->
<path d="M1571,199L1574,213L1578,201L1582,213L1585,199" stroke="#0000f0" fill="none"/>
<path d="M1594,213L1597,207L1599,211L1601,200L1603,211L1605,207L1608,213" stroke="#0000f0" fill="none"/>
<path d="M1617,213L1621,208L1623,210L1627,204L1629,206L1632,199" stroke="#0000f0" fill="none"/>
<path d="M1640,199L1646,212L1649,204L1655,214" stroke="#0000f0" fill="none"/>
<!-- row 5 -->
<path d="M1571,235L1573,228L1575,231L1578,224L1581,229L1583,227L1586,233" stroke="#0000f0" fill="none"/><rect x="1571" y="233" width="2" height="2"/>
<text x="1594" y="229" font-size="9" font-weight="bold" fill="#0000f0" textLength="14">GP</text><text x="1617" y="229" font-size="9" font-weight="bold" fill="#0000f0" textLength="14">GA</text><text x="1640" y="229" font-size="9" font-weight="bold" fill="#0000f0">G</text>
<path d="M1594,221.5H1608M1617,221.5H1631M1640,221.5H1654" stroke="#000"/><path d="M1594,231.5H1608M1617,231.5H1631M1640,231.5H1654" stroke="#999"/><path d="M1594,235.5H1608M1617,235.5H1631M1640,235.5H1654" stroke="#0000f0"/>
<!-- row 6 -->
<path d="M1571,243.5H1585M1582,247.5H1585M1582,251.5H1585" stroke="#999"/><path d="M1571,255.5H1585" stroke="#0000f0"/><text x="1571" y="252" font-size="8" font-weight="bold" fill="#0000f0">%</text>
<path d="M1594,243.5H1608M1603,247.5H1608M1603,251.5H1608" stroke="#999"/><path d="M1594,255.5H1608" stroke="#0000f0"/><text x="1594" y="252" font-size="9" fill="#0000f0">T</text>
<path d="M1617.5,243V257M1631.5,243V257" stroke="#000"/><path d="M1618,251L1631,246M1618,254L1631,250M1618,257L1631,253" stroke="#0000f0"/>
<path d="M1640.5,243V257" stroke="#000"/><path d="M1641,251L1655,246M1641,254L1655,250M1641,257L1655,253" stroke="#0000f0"/>
<!-- row 7 -->
<path d="M1571.5,264V279M1585.5,264V279" stroke="#000"/><path d="M1572,275L1585,270" stroke="#0000f0"/>
<path d="M1595.5,264V279M1600.5,264V279M1605.5,264V279M1610.5,264V279" stroke="#0000f0"/>
<path d="M1617.5,264V279M1620.5,264V279M1626.5,264V279M1632.5,264V279" stroke="#0000f0"/>
<path d="M1641.5,264V279" stroke="#0000f0"/><path d="M1645.5,264V279" stroke="#999"/><text x="1647" y="272" font-size="8" font-weight="bold" fill="#0000f0">G</text>
<!-- row 8 -->
<path d="M1570.5,287V301M1574.5,287V301M1578.5,287V301M1582.5,287V301M1586.5,287V301" stroke="#0000f0"/><path d="M1586.5,287V301" stroke="#000"/>
<path d="M1593,287V301M1596,287V301M1599,287V301" stroke="#0000f0" stroke-width="1.6"/><path d="M1604.5,287V301M1608.5,287V301" stroke="#000"/>
<path d="M1616.5,287V301" stroke="#0000f0"/><path d="M1622.5,287V301M1625.5,287V301M1628.5,287V301" stroke="#000"/><path d="M1632.5,287V301" stroke="#000"/>
<path d="M1640,301L1656,286M1640,301L1656,293M1640,301H1656" stroke="#0000f0" fill="none"/><path d="M1640,301L1650,293" stroke="#000"/>
<!-- row 9 -->
<path d="M1571,309V323H1585" stroke="#000" fill="none" stroke-width="1.2"/><path d="M1572,322L1585,310M1572,322L1585,314M1572,322L1585,318" stroke="#0000f0"/><path d="M1571,324.5H1585" stroke="#0000f0"/>
<path d="M1594,311L1601,319L1608,311M1601,319V324" stroke="#000" fill="none"/>
<path d="M1618,311L1631,309L1624,323Z" fill="none" stroke="#000"/><circle cx="1618" cy="311" r="1.2"/><circle cx="1631" cy="309" r="1.2"/><circle cx="1624" cy="323" r="1.2"/>
<rect x="1641.5" y="310.5" width="14" height="11" fill="none" stroke="#0000f0" stroke-width="1.2"/>
<!-- row 10 -->
<path d="M1578,333L1582,338H1580V343H1576V338H1574Z" fill="#f00000"/>
<path d="M1599,333H1603V338H1605L1601,343L1597,338H1599Z" fill="#008000"/>
<path d="M1617,345L1629,333" stroke="#000080"/><path d="M1627,337L1632,342H1630V345H1624V342H1622Z" fill="#f00000"/>
<text x="1647" y="344" font-size="14" font-weight="bold" text-anchor="middle">A</text>
<!-- row 11 -->
<text x="1578" y="367" font-size="14" font-weight="bold" text-anchor="middle">A</text><path d="M1571,356h4M1573,354v4" stroke="#000"/>
<rect x="1596" y="354" width="11" height="11" fill="#a0a0a0" stroke="#a0a0a0" stroke-width="2"/><rect x="1595.5" y="353.5" width="12" height="12" fill="none" stroke="#ddd" stroke-width=".6"/>
<path d="M1619,355L1629,365M1629,355L1619,365" stroke="#f00000" stroke-width="1.5"/>
<rect x="1641" y="358" width="4" height="7" fill="#fff" stroke="#aaa"/><path d="M1646,357L1654,349" stroke="#aaa"/><circle cx="1653" cy="353" r="3" fill="#ffe000"/>
<!-- row 12 -->
<rect x="1572.5" y="375.5" width="12" height="13" fill="#fff" stroke="#000"/><path d="M1575,379h7M1575,382h7M1575,385h7" stroke="#0000f0"/>
<rect x="1595.5" y="378.5" width="12" height="7" fill="#eef" stroke="#000"/><path d="M1597,379v2M1599,379v2M1601,379v2M1603,379v2M1605,379v2" stroke="#000"/>
<rect x="1619.5" y="377.5" width="11" height="9" fill="#fff" stroke="#000"/><rect x="1621" y="379" width="4" height="5" fill="#208060"/><path d="M1626,380h3M1626,383h3" stroke="#888"/>
<path d="M1640,390L1647,376L1654,390" fill="none" stroke="#000"/>
<!-- row 13 -->
<text x="1578" y="411" font-size="15" fill="#f00000" text-anchor="middle" font-family="'WenQuanYi Zen Hei','Noto Sans CJK SC',sans-serif">上</text>
<text x="1601" y="411" font-size="15" fill="#008000" text-anchor="middle" font-family="'WenQuanYi Zen Hei','Noto Sans CJK SC',sans-serif">下</text>
<path d="M1624,396l4,4h-8z" fill="#f00000"/><path d="M1624,401l4,4h-8z" fill="#f0d000"/><path d="M1624,406l4,4h-8z" fill="#008000"/>
<!-- row 14 -->
<g font-size="14" fill="#a8a8a8" text-anchor="middle" font-family="'WenQuanYi Zen Hei','Noto Sans CJK SC',sans-serif">
<text x="1578" y="431">买</text><text x="1601" y="431">卖</text><text x="1624" y="431">平</text>
</g>
</g>
</svg>
</body></html>
